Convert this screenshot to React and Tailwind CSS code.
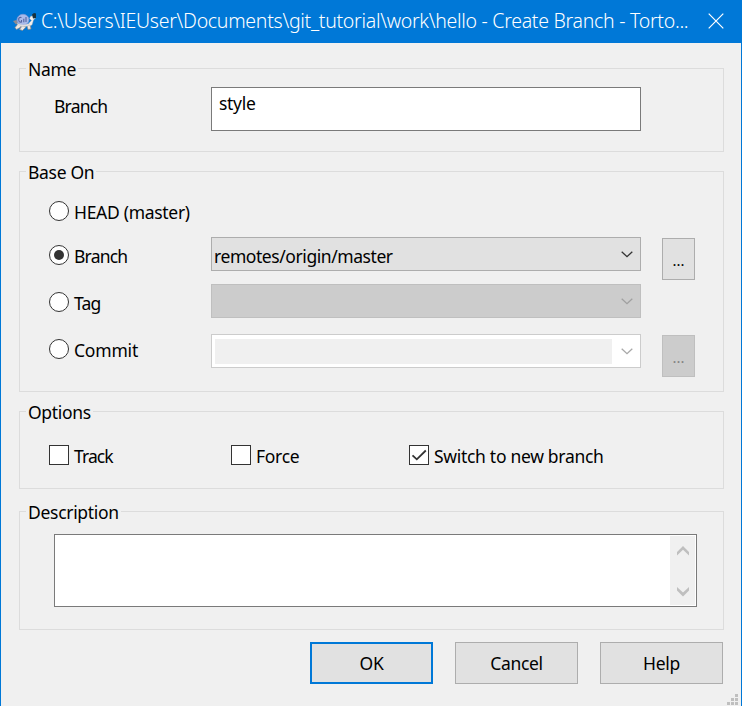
import React from "react";

function TurtleIcon() {
  return (
    <svg width="24" height="20" viewBox="0 0 24 20" className="shrink-0">
      <path d="M0 9 3.500 8 5.500 11 3 12.500Z" fill="#8d8b90" />
      <path d="M5 12 2 15.500 3.500 17.500 8 15ZM9 14 6.500 17.500 9.500 18.500 13 15ZM14 14 15 17.500 18 17 17 12Z" fill="#ece8e5" stroke="#8a8583" strokeWidth=".7" />
      <path d="M16 11 18.500 8.500 16.500 6.500 17.500 4.500 20 3.500 22.500 6 20.500 8 19 13 16 14Z" fill="#f2f0f0" stroke="#a6a6a8" strokeWidth=".4" />
      <path d="M19 2.500 21 1 23 1.500V6L20 6.500Z" fill="#17323f" />
      <ellipse cx="10" cy="7.800" rx="6" ry="5.500" fill="#a9bbea" stroke="#7f9bd8" strokeWidth=".8" />
      <path d="M4 11Q10 14.500 17 11L16 13.500Q10 16 5 13.500Z" fill="#dedcdd" />
      <path d="M8.500 5.500Q5.500 4.800 5.700 7.800T8.500 10V8M10.800 6.800V10.300M13 5V10" fill="none" stroke="#5565a0" strokeWidth="1.100" />
    </svg>
  );
}

function Group({ title, className, children }) {
  return (
    <section className={`w-[705px] border border-[#dcdcdc] ${className}`}>
      <h2 className="-mt-[11px] ml-1.5 h-6 w-fit bg-[#f0f0f0] pr-0.5 pl-[2px] leading-[23px]">{title}</h2>
      {children}
    </section>
  );
}

function Radio({ label, checked, className }) {
  return (
    <div className={`ml-[29px] flex w-[162px] gap-[5px] ${className}`}>
      <span className="flex size-5 shrink-0 items-center justify-center rounded-full border border-[#333] bg-white">
        {checked && <span className="size-2.5 rounded-full bg-[#333]" />}
      </span>
      <span className="leading-[23px] whitespace-nowrap">{label}</span>
    </div>
  );
}

function Check({ label, checked, className }) {
  return (
    <div className={`flex gap-[5px] ${className}`}>
      <span className="size-5 shrink-0 border border-[#333] bg-white">
        {checked && (
          <svg width="18" height="18" viewBox="0 0 18 18">
            <path d="M2.500 9.300 6.800 13.300 15.800 4.500" fill="none" stroke="#333" strokeWidth="1.800" />
          </svg>
        )}
      </span>
      <span className="leading-[23px] whitespace-nowrap">{label}</span>
    </div>
  );
}

function Arrow({ color }) {
  return (
    <svg width="12" height="7" viewBox="0 0 12 7" className="shrink-0">
      <path d="M.7.700 6 5.700 11.300.700" fill="none" stroke={color} strokeWidth="1.300" />
    </svg>
  );
}

function Browse({ className }) {
  return (
    <button className={`ml-[21px] mt-px flex h-[42px] w-[33px] justify-center border pt-[9px] text-[15px] leading-6 tracking-normal ${className}`}>...</button>
  );
}

function Button({ label, className }) {
  return (
    <button className={`flex h-[42px] w-[123px] items-center justify-center bg-[#e1e1e1] ${className}`}>{label}</button>
  );
}

export default function App() {
  return (
    <div className="flex h-[706px] w-[742px] flex-col overflow-hidden bg-[#f0f0f0] font-['Noto_Sans','Open_Sans',sans-serif] text-[17.5px] tracking-[-0.3px] text-black">
      <header className="flex h-[43px] shrink-0 items-center bg-[#0078d7] pl-[13px] text-white">
        <TurtleIcon />
        <h1 className="ml-1 w-[664px] shrink-0 pb-[2px] text-[19.5px] font-light tracking-[-0.28px] whitespace-nowrap">
          C:\Users\IEUser\Documents\git_tutorial\work\hello - Create Branch - Torto...
        </h1>
        <svg width="16" height="16" viewBox="0 0 16 16" className="mb-0.5 ml-[3px] shrink-0">
          <path d="M.7.700 15.300 15.300M15.300.700.7 15.300" fill="none" stroke="#fff" strokeWidth="1.200" />
        </svg>
      </header>

      <main className="relative flex flex-1 flex-col border-x border-[#0078d7] pt-[25px] pl-[18px]">
        <Group title="Name" className="h-[84px]">
          <div className="mt-[5px] flex">
            <span className="mt-2 ml-[34px] w-[157px] leading-[23px] tracking-[-0.8px]">Branch</span>
            <div className="h-[44px] w-[430px] border border-[#7a7a7a] bg-white pt-1 pl-[7px] leading-[23px]">style</div>
          </div>
        </Group>

        <Group title="Base On" className="mt-[19px] h-[221px]">
          <div className="flex h-[52px] items-start">
            <Radio label="HEAD (master)" className="mt-4" />
          </div>
          <div className="flex h-[47px] items-start">
            <Radio label="Branch" checked className="mt-2 tracking-[-0.8px]" />
            <div className="flex h-[34px] w-[430px] items-center justify-between border border-[#adadad] bg-[#e1e1e1] pr-[7px] pl-[2px]">
              <span className="mt-1 tracking-[-0.43px]">remotes/origin/master</span>
              <Arrow color="#333" />
            </div>
            <Browse className="border-[#adadad] bg-[#e1e1e1]" />
          </div>
          <div className="flex h-[50px] items-start">
            <Radio label="Tag" className="mt-2 tracking-[-0.8px]" />
            <div className="flex h-[34px] w-[430px] items-center justify-end border border-[#bfbfbf] bg-[#ccc] pr-[7px]">
              <Arrow color="#a0a0a0" />
            </div>
          </div>
          <div className="flex items-start">
            <Radio label="Commit" className="mt-[5px] tracking-[-0.2px]" />
            <div className="flex h-[34px] w-[430px] items-center justify-between border border-[#ccc] bg-white pr-[7px] pl-[3px]">
              <span className="h-[25px] w-[397px] bg-[#f0f0f0]" />
              <Arrow color="#a8a8a8" />
            </div>
            <Browse className="border-[#bfbfbf] bg-[#ccc] text-[#838383]" />
          </div>
        </Group>

        <Group title="Options" className="mt-[19px] h-[78px]">
          <div className="mt-5 ml-[29px] flex">
            <Check label="Track" className="w-[182px] tracking-[-0.9px]" />
            <Check label="Force" className="w-[178px]" />
            <Check label="Switch to new branch" checked />
          </div>
        </Group>

        <Group title="Description" className="mt-[22px] h-[119px]">
          <div className="mt-[9px] ml-[34px] flex h-[73px] w-[643px] justify-end border border-[#7a7a7a] bg-white p-px">
            <div className="flex w-[25px] flex-col items-center justify-between bg-[#f0f0f0] pt-2.5 pb-2">
              <svg width="12" height="10" viewBox="0 0 12 10">
                <path d="M0 6 6 0 12 6V9.500L6 3.800 0 9.500Z" fill="#bfbfbf" />
              </svg>
              <svg width="12" height="10" viewBox="0 0 12 10">
                <path d="M0 0 6 5.500 12 0V3.500L6 9.500 0 3.500Z" fill="#bfbfbf" />
              </svg>
            </div>
          </div>
        </Group>

        <div className="mt-3 ml-[291px] flex gap-[22px]">
          <Button label="OK" className="border-2 border-[#0078d7]" />
          <Button label="Cancel" className="border border-[#adadad]" />
          <Button label="Help" className="border border-[#adadad]" />
        </div>

        <svg width="11" height="11" viewBox="0 0 11 11" className="absolute right-[3px] bottom-px">
          <path d="M8 0h3v3h-3ZM8 4h3v3h-3ZM4 4h3v3h-3ZM8 8h3v3h-3ZM4 8h3v3h-3ZM0 8h3v3h-3Z" fill="#bfbfbf" />
        </svg>
      </main>
    </div>
  );
}
